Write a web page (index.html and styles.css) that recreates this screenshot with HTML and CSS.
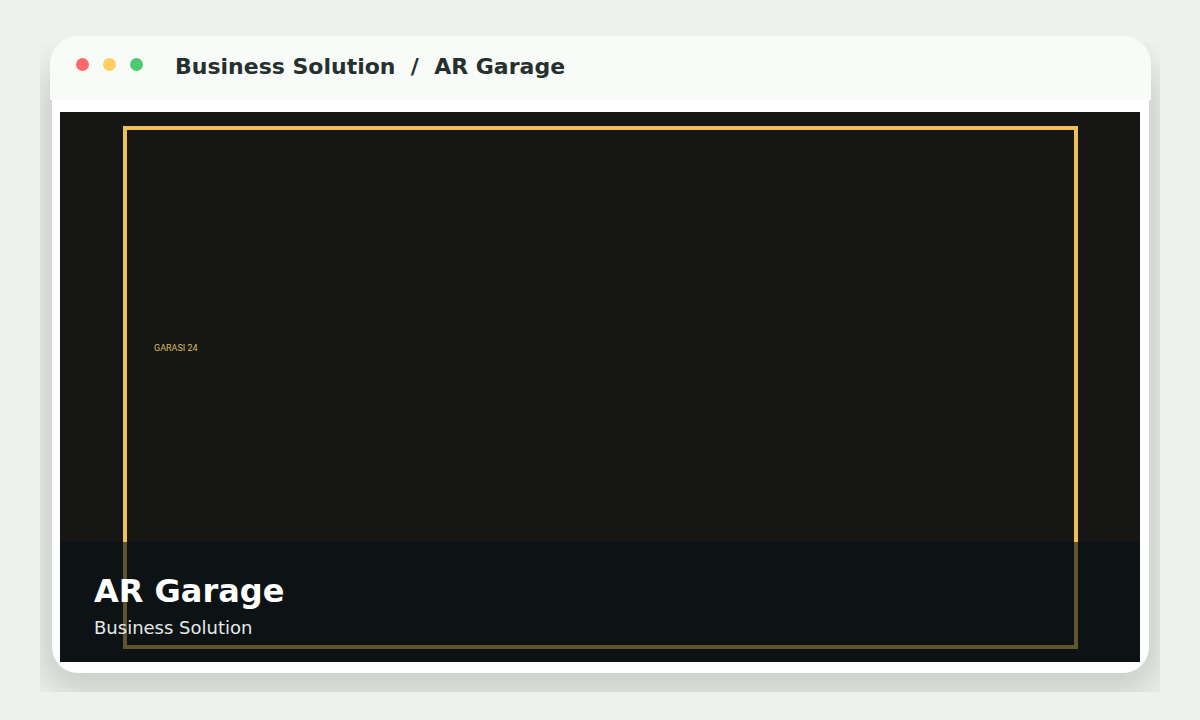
FILE: index.html
```html
<!DOCTYPE html>
<html lang="en">
<head>
    <meta charset="UTF-8">
    <meta name="viewport" content="width=device-width, initial-scale=1.0">
    <title>AR Garage | Business Solution</title>
    <link rel="stylesheet" href="styles.css">
</head>
<body>
    <main class="window">
        <!-- Title bar -->
        <header class="window-bar">
            <div class="dots">
                <span class="dot dot-red"></span>
                <span class="dot dot-yellow"></span>
                <span class="dot dot-green"></span>
            </div>
            <p class="window-title">Business Solution&nbsp; / &nbsp;AR Garage</p>
        </header>

        <!-- Preview -->
        <div class="window-body">
            <section class="screen">
                <div class="frame">
                    <span class="frame-label">GARASI 24</span>
                </div>
                <div class="caption">
                    <h1>AR Garage</h1>
                    <p>Business Solution</p>
                </div>
            </section>
        </div>
    </main>
</body>
</html>
```

FILE: styles.css
```css
:root {
    --page: #eef1ee;
    --bar: #f8fbf8;
    --ink: #26302e;
    --screen: #161714;
    --gold: #f0bf55;
}

* {
    box-sizing: border-box;
}

body {
    margin: 0;
    min-height: 100vh;
    padding: 36px 49px 47px 50px;
    display: flex;
    flex-direction: column;
    background: var(--page);
    font-family: "DejaVu Sans", Verdana, sans-serif;
}

h1, p {
    margin: 0;
}

.window {
    position: relative;
    flex: 1;
    display: flex;
    flex-direction: column;
}

/* Soft shadow, cut off just outside the window */
.window::before {
    content: '';
    position: absolute;
    inset: 24px 2px 0;
    border-radius: 28px;
    box-shadow: 0 10px 32px 12px rgba(30, 45, 38, 0.17);
    clip-path: inset(-18px -11px -19px -12px);
    z-index: -1;
}

.window-bar {
    display: flex;
    align-items: center;
    gap: 32px;
    height: 64px;
    padding: 0 26px 2px;
    background: var(--bar);
    border-radius: 28px 28px 0 0;
}

.dots {
    display: flex;
    gap: 14px;
    padding-bottom: 5px;
}

.dot {
    width: 13px;
    height: 13px;
    border-radius: 50%;
}

.dot-red {
    background: #ff6868;
}

.dot-yellow {
    background: #ffcf60;
}

.dot-green {
    background: #4dca70;
}

.window-title {
    color: var(--ink);
    font-size: 22px;
    font-weight: bold;
    line-height: 28px;
}

.window-body {
    flex: 1;
    display: flex;
    margin: 0 2px;
    padding: 12px 9px 11px 8px;
    background: #fff;
    border-radius: 0 0 26px 26px;
}

.screen {
    position: relative;
    flex: 1;
    display: flex;
    padding: 14px 62px 13px 63px;
    background: var(--screen);
}

.frame {
    flex: 1;
    display: flex;
    align-items: center;
    padding: 0 27px 80px;
    border: 4px solid var(--gold);
}

.frame-label {
    color: #d6bd62;
    font-family: Roboto, "Liberation Sans", sans-serif;
    font-size: 9px;
    line-height: 12px;
}

.caption {
    position: absolute;
    left: 0;
    right: 0;
    bottom: 0;
    height: 120px;
    padding: 29px 34px 0;
    background: rgba(8, 18, 22, 0.62);
    color: #fff;
}

.caption h1 {
    font-size: 32px;
    line-height: 40px;
}

.caption p {
    margin-top: 5px;
    color: #e4e9e8;
    font-size: 18px;
    line-height: 24px;
}
```
